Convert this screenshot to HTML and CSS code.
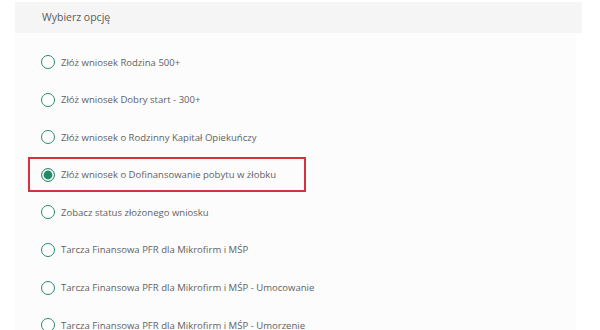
FILE: index.html
```html
<!DOCTYPE html>
<html lang="pl">
<head>
    <meta charset="UTF-8">
    <meta name="viewport" content="width=device-width, initial-scale=1.0">
    <title>Wybierz opcję</title>
    <link rel="stylesheet" href="styles.css">
</head>
<body>
    <div class="panel">
        <div class="panel-header">Wybierz opcję</div>
        <div class="panel-body">
            <label class="option"><span class="radio"></span>Złóż wniosek Rodzina 500+</label>
            <label class="option"><span class="radio"></span>Złóż wniosek Dobry start - 300+</label>
            <label class="option"><span class="radio"></span>Złóż wniosek o Rodzinny Kapitał Opiekuńczy</label>
            <label class="option selected"><span class="radio checked"></span>Złóż wniosek o Dofinansowanie pobytu w żłobku</label>
            <label class="option"><span class="radio"></span>Zobacz status złożonego wniosku</label>
            <label class="option"><span class="radio"></span>Tarcza Finansowa PFR dla Mikrofirm i MŚP</label>
            <label class="option"><span class="radio"></span>Tarcza Finansowa PFR dla Mikrofirm i MŚP - Umocowanie</label>
            <label class="option"><span class="radio"></span>Tarcza Finansowa PFR dla Mikrofirm i MŚP - Umorzenie</label>
        </div>
    </div>
</body>
</html>
```

FILE: styles.css
```css
body {
    margin: 0;
    background: #fff;
    font-family: "Open Sans", Arial, sans-serif;
    color: #555;
    overflow: hidden;
}
.panel {
    margin: 2px 0 0 15px;
    width: 567px;
}
.panel-header {
    height: 31px;
    line-height: 30px;
    padding-left: 27px;
    background: #f5f5f5;
    font-size: 10.5px;
    color: #5a5a5a;
}
.panel-body {
    width: 548px;
    height: 297px;
    padding: 11.5px 0 0 13px;
    background: #fcfcfc;
    display: flex;
    flex-direction: column;
    align-items: flex-start;
    gap: 2.6px;
}
.option {
    box-sizing: border-box;
    height: 35px;
    flex-shrink: 0;
    display: flex;
    align-items: center;
    gap: 6px;
    padding: 0 28px 0 11px;
    border: 2px solid transparent;
    font-size: 9.55px;
    color: #626262;
}
.option.selected {
    border-color: #d8303f;
}
.radio {
    box-sizing: border-box;
    width: 14px;
    height: 14px;
    border: 1.8px solid #2a8a6c;
    border-radius: 50%;
    background: #fff;
    flex-shrink: 0;
}
.radio.checked {
    box-shadow: inset 0 0 0 1.6px #fff, inset 0 0 0 6px #1f8a66;
}
```
